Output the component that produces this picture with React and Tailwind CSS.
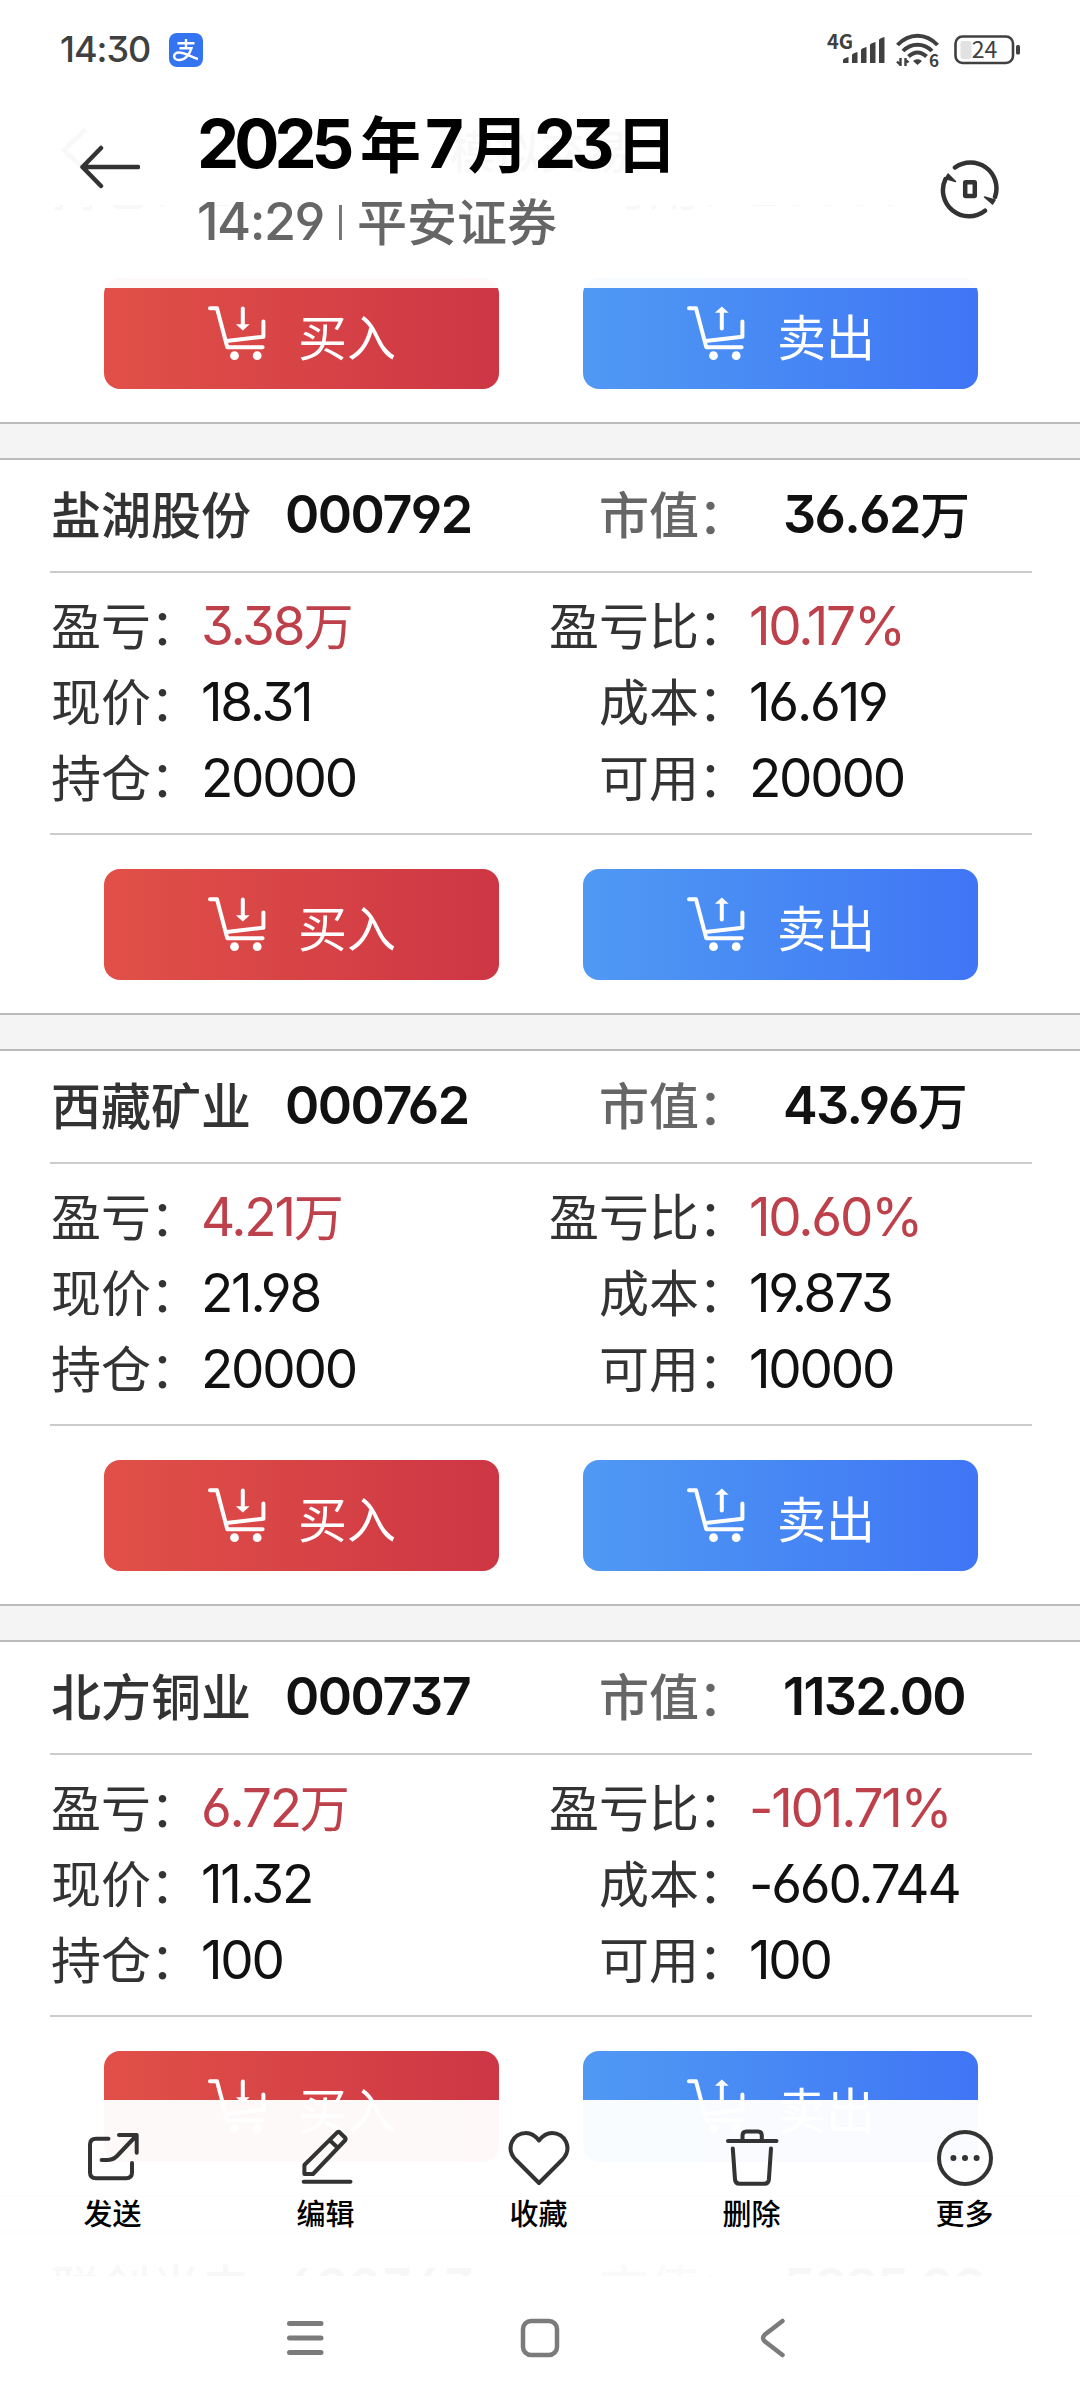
const holdings = [
  { name: '紫金矿业', code: '601899', worth: '39.20', worthUnit: '万', profit: '2.15', unit: '万', ratio: '5.80%', price: '19.60', cost: '18.525', held: '20000', usable: '20000' },
  { name: '盐湖股份', code: '000792', worth: '36.62', worthUnit: '万', profit: '3.38', unit: '万', ratio: '10.17%', price: '18.31', cost: '16.619', held: '20000', usable: '20000' },
  { name: '西藏矿业', code: '000762', worth: '43.96', worthUnit: '万', profit: '4.21', unit: '万', ratio: '10.60%', price: '21.98', cost: '19.873', held: '20000', usable: '10000' },
  { name: '北方铜业', code: '000737', worth: '1132.00', worthUnit: '', profit: '6.72', unit: '万', ratio: '-101.71%', price: '11.32', cost: '-660.744', held: '100', usable: '100' },
  { name: '联创光电', code: '600363', worth: '5825.00', worthUnit: '', profit: '1.02', unit: '万', ratio: '-101.71%', price: '58.25', cost: '-43.750', held: '100', usable: '100' },
];

// Digits sit a little taller than the Chinese text, with open 6/9 and a flat 3.
function Num({ children, className = '' }) {
  return (
    <span className={`font-['Inter',sans-serif] whitespace-nowrap [font-feature-settings:'cv03','cv04','cv09'] ${className}`}>
      {children}
    </span>
  );
}

function Cart({ up }) {
  return (
    <svg className="h-[56px] w-[60px] shrink-0" viewBox="0 0 60 56" fill="none" stroke="currentColor" strokeWidth="4" strokeLinecap="round" strokeLinejoin="round">
      <path d="M2 2.3H9L19.3 41.3H54.6M18.5 34.9L55.4 30.7V15.5" />
      <path d={up ? 'M34.8 6V22.5' : 'M34.8 2.5V19'} />
      <path d={up ? 'M27.9 6.8H41.7L34.8 .5Z' : 'M27.9 18.3H41.7L34.8 24.5Z'} fill="currentColor" stroke="none" />
      <circle cx="26.5" cy="49.7" r="4.4" fill="currentColor" stroke="none" />
      <circle cx="49.2" cy="49.7" r="4.4" fill="currentColor" stroke="none" />
    </svg>
  );
}

function TradeButton({ label, up, className }) {
  return (
    <button className={`flex h-[111px] w-[395px] items-center rounded-2xl pl-[104px] text-[49px] leading-none text-white ${className}`}>
      <Cart up={up} />
      <span className="mt-[2px] ml-[30px]">{label}</span>
    </button>
  );
}

function Label({ children, className = '' }) {
  return (
    <span className={`pb-[5px] ${className}`}>
      {children}
      <span className="-ml-px mr-px">：</span>
    </span>
  );
}

function Field({ label, value, unit, red }) {
  return (
    <div className="flex h-[76px] items-center whitespace-nowrap">
      <Label className="text-[#333]">{label}</Label>
      <span className={`flex items-center ${red ? 'text-[#bd404b]' : 'text-[#111]'}`}>
        <Num className="text-[53px] tracking-[-2.2px]">{value}</Num>
        <span className="pb-[5px]">{unit}</span>
      </span>
    </div>
  );
}

function HoldingCard({ h }) {
  return (
    <div className="h-[553px] bg-white">
      <div className="mx-[50px] flex h-[113px] w-[982px] items-center border-b-2 border-[#ccc] pb-[2px] pl-px text-[50px] font-medium whitespace-nowrap">
        <div className="flex w-[548px] items-center">
          <span className="pb-[5px] text-[#333]">{h.name}</span>
          <Num className="ml-[34px] text-[52px] font-semibold tracking-[-1.5px] text-[#111]">{h.code}</Num>
        </div>
        <Label className="w-[184px] text-[#666]">市值</Label>
        <span className="flex items-center text-[#111]">
          <Num className="text-[52px] font-semibold tracking-[-1.6px]">{h.worth}</Num>
          <span className="pb-[5px]">{h.worthUnit}</span>
        </span>
      </div>
      <div className="mx-[50px] flex h-[262px] w-[982px] border-b-2 border-[#ccc] pt-[15px] pl-px text-[50px]">
        <div className="w-[498px]">
          <Field label="盈亏" value={h.profit} unit={h.unit} red />
          <Field label="现价" value={h.price} />
          <Field label="持仓" value={h.held} />
        </div>
        <div>
          <Field label="盈亏比" value={h.ratio} red />
          <div className="pl-[50px]">
            <Field label="成本" value={h.cost} />
            <Field label="可用" value={h.usable} />
          </div>
        </div>
      </div>
      <div className="flex gap-[84px] pt-[34px] pl-[104px]">
        <TradeButton label="买入" className="bg-linear-to-r from-[#e15048] to-[#cd3644]" />
        <TradeButton label="卖出" up className="bg-linear-to-r from-[#5099f3] to-[#4075f5]" />
      </div>
    </div>
  );
}

function StatusBar() {
  return (
    <div className="flex h-[100px] items-center pl-[60px] text-[#404040]">
      <Num className="w-[109px] text-[36px] font-medium tracking-[-1px]">14:30</Num>
      <svg className="h-[34px] w-[34px]" viewBox="0 0 34 34" fill="none" stroke="#fff">
        <rect width="34" height="34" rx="8" fill="#3574f0" stroke="none" />
        <path d="M8.5 10.3H25.5M17 6V15M10.5 15.2H22.5C21 20.5 16.5 27 10 27C3.5 27 3.5 19.5 10 19.5C16 19.5 21.5 24 29 26" strokeWidth="2.4" />
      </svg>
      <div className="ml-[624px] flex h-[34px] items-center">
        <svg className="h-[34px] w-[58px]" viewBox="0 0 58 34" fill="currentColor">
          <text x="0" y="15.500" fontSize="20" fontWeight="700" fontFamily="Noto Sans CJK SC, sans-serif">4G</text>
          <path d="M16 27Q16 25.500 21.500 24V30H16ZM25 22Q25 20.500 30.500 19V30H25ZM34 17Q34 15.500 39.500 14V30H34ZM43 12Q43 10.500 48.500 9V30H43ZM52 7Q52 5.500 57.500 4V30H52Z" />
        </svg>
        <svg className="ml-[11px] h-[34px] w-[44px]" viewBox="0 0 44 34" fill="none" stroke="currentColor" strokeWidth="4">
          <path d="M1.500 12C13 -.5 30 -.5 41.500 12M7 18C15 9.500 28 9.500 36 18M12.500 23.500C18 18 25 18 30.500 23.500" />
          <path d="M17 28C20 25.500 23 25.500 26 28L21.500 32Z" fill="currentColor" stroke="none" />
          <path d="M4.500 25V33M9.500 25V33M1 28.500L4.500 32M9.500 26.500L12.500 29.500" strokeWidth="2.4" />
          <text x="33" y="33.500" fontSize="17" fontWeight="700" fill="currentColor" stroke="none" fontFamily="Noto Sans CJK SC, sans-serif">6</text>
        </svg>
        <svg className="ml-[14px] h-[34px] w-[67px]" viewBox="0 0 67 34">
          <rect x="1.500" y="3.500" width="57.500" height="26.500" rx="7" fill="none" stroke="currentColor" strokeWidth="2.600" />
          <rect x="6.500" y="8" width="11" height="18" rx="2" fill="#e2e2e2" />
          <rect x="62" y="12" width="4" height="9.500" rx="1.500" fill="currentColor" />
          <text x="30.500" y="25" fontSize="23" textAnchor="middle" fill="currentColor" fontFamily="Noto Sans CJK SC, sans-serif">24</text>
        </svg>
      </div>
    </div>
  );
}

function Header() {
  return (
    <header className="absolute inset-x-0 top-0 h-[288px] bg-white/97">
      <StatusBar />
      <div className="flex pl-[80px]">
        <svg className="mt-[37px] h-[60px] w-[60px]" viewBox="0 0 60 60" fill="none" stroke="#333" strokeWidth="4.500" strokeLinecap="round" strokeLinejoin="round">
          <path d="M58 30H2.500M21 11L2.500 30L21 49" />
        </svg>
        <div className="ml-[57px] w-[743px] whitespace-nowrap">
          <div className="flex h-[88px] items-center text-[61px] font-bold text-black">
            <Num className="w-[163px] text-[67px] tracking-[-5px]">2025</Num>
            <span className="w-[65px] pb-[5px]">年</span>
            <Num className="w-[43px] text-[67px]">7</Num>
            <span className="w-[66px] pb-[5px]">月</span>
            <Num className="w-[82px] text-[67px] tracking-[-5px]">23</Num>
            <span className="pb-[5px]">日</span>
          </div>
          <div className="flex h-[68px] items-center text-[50px] font-medium text-[#666]">
            <Num className="w-[142px] text-[52px] tracking-[-1.5px]">14:29</Num>
            <span className="h-[35px] w-[3px] bg-[#777]" />
            <span className="ml-[15px] pb-[5px]">平安证券</span>
          </div>
        </div>
        <svg className="mt-[59px] h-[60px] w-[60px]" viewBox="0 0 60 60" fill="none" stroke="#333" strokeWidth="4.500" strokeLinecap="round" strokeLinejoin="round">
          <path d="M15 8.500A26 26 0 0 1 55 38M45 51.700A26 26 0 0 1 5.500 20" />
          <path d="M44.500 38L55 41L52.500 45ZM8 15L15.500 22.500L5.500 19.500Z" fill="#333" strokeWidth="1.500" />
          <rect x="25.200" y="23.200" width="9.600" height="13.800" rx=".5" />
        </svg>
      </div>
    </header>
  );
}

const tools = [
  { label: '发送', icon: <path d="M25.500 10.700H13Q7 10.700 7 16.500V44.500Q7 50.300 13 50.300H43Q49 50.300 49 44.500V35M36 7H53.700V24.700M18.600 32H24Q30 32 34 28L53 8" /> },
  { label: '编辑', icon: <path d="M8.400 46V37L41.500 4.200Q42.500 3.500 43.500 4.200L49.400 10Q50 11 49.400 12L17 46ZM34 12.500L41.500 19.500M7.700 53.700H54.500" /> },
  { label: '收藏', icon: <path d="M30 55L6.500 31.500C-4 20 4 5 17 5C23 5 26.500 8 30 12.500C33.500 8 37 5 43 5C56 5 64 20 53.500 31.500Z" /> },
  { label: '删除', icon: <path d="M6 13H54.500M20.500 13V7.500Q20.500 3.500 24.500 3.500H36Q39.800 3.500 39.800 7.500V13M10.800 20.500L13 51.500Q13.300 55.700 17.500 55.700H42.500Q46.500 55.700 46.900 51.500L49 20.500" /> },
  { label: '更多', icon: <><circle cx="30" cy="30" r="26" /><path d="M18.400 30H18.410M30 30H30.010M41.600 30H41.610" strokeWidth="6" /></> },
];

function Toolbar() {
  return (
    <div className="absolute inset-x-0 top-[2100px] flex h-[176px] bg-white/97 pl-[6px]">
      {tools.map((t) => (
        <div key={t.label} className="flex w-[213px] flex-col items-center pt-[28px]">
          <svg className="h-[60px] w-[60px] overflow-visible" viewBox="0 0 60 60" fill="none" stroke="#333" strokeWidth="4" strokeLinecap="round" strokeLinejoin="round">
            {t.icon}
          </svg>
          <span className="mt-[8px] text-[29px] leading-[32px] font-medium text-black">{t.label}</span>
        </div>
      ))}
    </div>
  );
}

function SystemNav() {
  return (
    <nav className="absolute inset-x-0 top-[2276px] flex h-[124px] gap-[184px] bg-white pt-[37px] pl-[280px]">
      <svg className="h-[50px] w-[50px]" viewBox="0 0 50 50" stroke="#7b7b7b" strokeWidth="5" strokeLinecap="round">
        <path d="M9.500 10.500H41M9.500 25H41M9.500 39.500H41" />
      </svg>
      <svg className="h-[50px] w-[50px]" viewBox="0 0 50 50" fill="none" stroke="#7b7b7b" strokeWidth="4.500">
        <rect x="9" y="8" width="34" height="34" rx="8" />
      </svg>
      <svg className="h-[50px] w-[50px]" viewBox="0 0 50 50" fill="none" stroke="#7b7b7b" strokeWidth="4.500" strokeLinecap="round">
        <path d="M34.500 8L17 21.500Q13 25 17 28.500L34.500 42" />
      </svg>
    </nav>
  );
}

export default function App() {
  return (
    <div className="relative h-[2400px] w-[1080px] overflow-hidden bg-white font-['Noto_Sans_CJK_SC',sans-serif] leading-[1.1]">
      <div className="flex h-[205px] items-end bg-white pb-[32px] pl-[60px]">
        <svg className="h-[46px] w-[28px]" viewBox="0 0 28 46" fill="none" stroke="#333" strokeWidth="5">
          <path d="M26 2L4 23L26 44" />
        </svg>
        <span className="ml-[362px] text-[45px] leading-[46px] font-medium text-[#333]">模拟交易</span>
      </div>
      <main className="h-[2195px] overflow-hidden">
        <div className="-mt-[336px] flex flex-col">
          {holdings.map((h) => (
            <div key={h.code}>
              <HoldingCard h={h} />
              <div className="h-[38px] border-y-2 border-[#bbb] bg-[#f4f4f4]" />
            </div>
          ))}
        </div>
      </main>
      <Header />
      <Toolbar />
      <SystemNav />
    </div>
  );
}
